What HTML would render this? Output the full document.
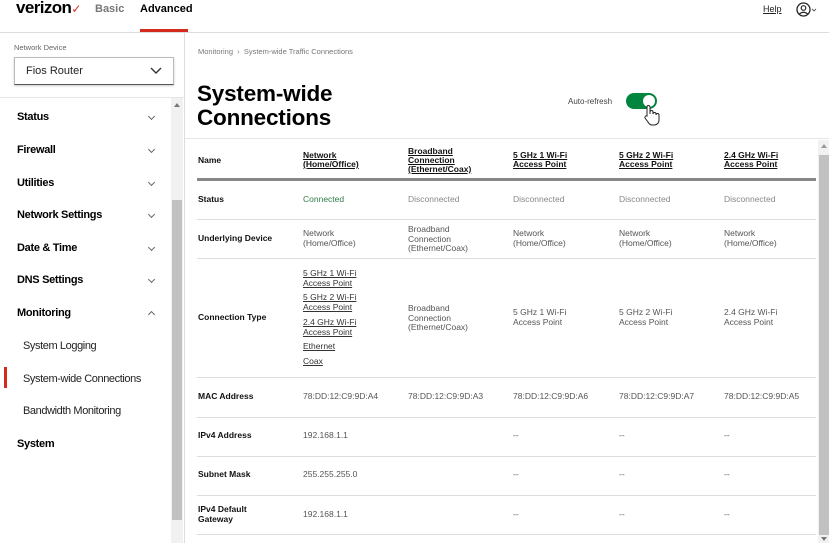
<!DOCTYPE html>
<html><head><meta charset="utf-8"><style>
*{margin:0;padding:0;box-sizing:border-box}
body{width:829px;height:543px;overflow:hidden;background:#fff;font-family:"Liberation Sans",Arial,sans-serif;color:#000;position:relative}
.a{position:absolute;white-space:nowrap}
.nav{font-size:11px;font-weight:bold;letter-spacing:-0.3px}
.chev{position:absolute;left:149px;width:5px;height:5px;border-right:1px solid #666;border-bottom:1px solid #666;transform:rotate(45deg)}
.sub{font-size:11px;color:#222;letter-spacing:-0.4px}
.t{font-size:8.5px;color:#555;line-height:9.5px}
.lb{font-size:8.5px;font-weight:bold;color:#111;line-height:9.5px}
.h{font-size:8.5px;font-weight:bold;color:#111;text-decoration:underline;line-height:9px}
.u{text-decoration:underline;color:#333}
.hr{position:absolute;left:197px;width:619px;height:1px;background:#ddd}
</style></head><body>
<div class="a" style="left:16px;top:-2px;font-size:17px;font-weight:bold;letter-spacing:-0.6px">verizon<span style="color:#d52b1e;font-size:12px;font-weight:normal">✓</span></div>
<div class="a" style="left:95px;top:3px;font-size:11px;font-weight:bold;color:#777">Basic</div>
<div class="a" style="left:140px;top:3px;font-size:11px;font-weight:bold">Advanced</div>
<div class="a" style="left:140px;top:29px;width:48px;height:3px;background:#d52b1e"></div>
<div class="a" style="left:763px;top:4px;font-size:9px;text-decoration:underline;color:#222">Help</div>
<svg class="a" style="left:796px;top:2px" width="26" height="16"><circle cx="7.5" cy="7.5" r="6.5" fill="none" stroke="#222" stroke-width="1.3"/><circle cx="7.5" cy="6" r="2.3" fill="none" stroke="#222" stroke-width="1.2"/><path d="M3.3 12 Q7.5 8.5 11.7 12" fill="none" stroke="#222" stroke-width="1.2"/><path d="M16 7l2 2 2-2" fill="none" stroke="#555" stroke-width="0.9"/></svg>
<div class="a" style="left:0;top:32px;width:829px;height:1px;background:#ddd"></div>
<div class="a" style="left:184px;top:33px;width:1px;height:510px;background:#ddd"></div>
<div class="a" style="left:14px;top:43px;font-size:7.5px;color:#666">Network Device</div>
<div class="a" style="left:14px;top:57px;width:160px;height:28px;border:1px solid #bbb;border-bottom:1.5px solid #555;box-shadow:0 1px 2px #ccc"></div>
<div class="a" style="left:26px;top:65px;font-size:11px;color:#222">Fios Router</div>
<svg class="a" style="left:150px;top:67px" width="12" height="8"><path d="M1 1l5 5 5-5" fill="none" stroke="#333" stroke-width="1.4"/></svg>
<div class="a" style="left:0;top:97px;width:184px;height:1px;background:#e5e5e5"></div>
<div class="a" style="left:171px;top:98px;width:12px;height:445px;background:#f1f1f1"></div>
<div class="a" style="left:172px;top:200px;width:10px;height:320px;background:#c1c1c1"></div>
<div class="a" style="left:174px;top:103px;width:0;height:0;border-left:3px solid transparent;border-right:3px solid transparent;border-bottom:4px solid #777"></div>
<div class="a nav" style="left:17px;top:111px">Status</div><div class="chev" style="top:114px"></div>
<div class="a nav" style="left:17px;top:144px">Firewall</div><div class="chev" style="top:147px"></div>
<div class="a nav" style="left:17px;top:177px">Utilities</div><div class="chev" style="top:180px"></div>
<div class="a nav" style="left:17px;top:209px">Network Settings</div><div class="chev" style="top:212px"></div>
<div class="a nav" style="left:17px;top:242px">Date &amp; Time</div><div class="chev" style="top:245px"></div>
<div class="a nav" style="left:17px;top:274px">DNS Settings</div><div class="chev" style="top:277px"></div>
<div class="a nav" style="left:17px;top:307px">Monitoring</div><div class="chev" style="top:312px;transform:rotate(225deg)"></div>
<div class="a sub" style="left:23px;top:340px">System Logging</div>
<div class="a" style="left:4px;top:367px;width:3px;height:21px;background:#d52b1e"></div>
<div class="a sub" style="left:23px;top:373px">System-wide Connections</div>
<div class="a sub" style="left:23px;top:405px">Bandwidth Monitoring</div>
<div class="a nav" style="left:17px;top:438px">System</div>
<div class="a" style="left:198px;top:47px;font-size:7.5px;color:#777">Monitoring &nbsp;›&nbsp; System-wide Traffic Connections</div>
<div class="a" style="left:197px;top:82px;font-size:22.5px;font-weight:bold;line-height:24px;letter-spacing:-0.2px">System-wide<br>Connections</div>
<div class="a" style="left:568px;top:97px;font-size:8px;color:#444">Auto-refresh</div>
<div class="a" style="left:626px;top:93px;width:31px;height:16px;border-radius:8px;background:#00853e"></div>
<div class="a" style="left:643px;top:95px;width:12px;height:12px;border-radius:6px;background:#fff"></div>
<svg class="a" style="left:643px;top:104px" width="18" height="24"><path d="M4 12V3a1.5 1.5 0 0 1 3 0v7l0-2a1.5 1.5 0 0 1 3 0v2a1.5 1.5 0 0 1 3 0v1a1.5 1.5 0 0 1 3 0v5c0 3-2 5-5 5H9c-2 0-3-1-4-3L2 14a1.5 1.5 0 0 1 2-2z" fill="#fff" stroke="#222" stroke-width="1"/></svg>
<div class="a" style="left:185px;top:138px;width:644px;height:1px;background:#e5e5e5"></div>
<div class="a" style="left:818px;top:140px;width:11px;height:403px;background:#f1f1f1"></div>
<div class="a" style="left:819px;top:155px;width:10px;height:380px;background:#c1c1c1"></div>
<div class="a" style="left:821px;top:144px;border-left:3px solid transparent;border-right:3px solid transparent;border-bottom:4px solid #999"></div>
<div class="a" style="left:821px;top:537px;border-left:3px solid transparent;border-right:3px solid transparent;border-top:4px solid #777"></div>
<div class="a lb" style="left:198px;top:156px">Name</div>
<div class="a h" style="left:303px;top:151px">Network<br>(Home/Office)</div>
<div class="a h" style="left:408px;top:147px">Broadband<br>Connection<br>(Ethernet/Coax)</div>
<div class="a h" style="left:513px;top:151px">5 GHz 1 Wi-Fi<br>Access Point</div>
<div class="a h" style="left:619px;top:151px">5 GHz 2 Wi-Fi<br>Access Point</div>
<div class="a h" style="left:724px;top:151px">2.4 GHz Wi-Fi<br>Access Point</div>
<div class="a" style="left:197px;top:178px;width:619px;height:3px;background:#888"></div>
<div class="a lb" style="left:198px;top:195px">Status</div>
<div class="a t" style="left:303px;top:195px;color:#2f7d4a">Connected</div>
<div class="a t" style="left:408px;top:195px;color:#888">Disconnected</div>
<div class="a t" style="left:513px;top:195px;color:#888">Disconnected</div>
<div class="a t" style="left:619px;top:195px;color:#888">Disconnected</div>
<div class="a t" style="left:724px;top:195px;color:#888">Disconnected</div>
<div class="hr" style="top:219px"></div>
<div class="a lb" style="left:198px;top:234px">Underlying Device</div>
<div class="a t" style="left:303px;top:229px">Network<br>(Home/Office)</div>
<div class="a t" style="left:408px;top:225px">Broadband<br>Connection<br>(Ethernet/Coax)</div>
<div class="a t" style="left:513px;top:229px">Network<br>(Home/Office)</div>
<div class="a t" style="left:619px;top:229px">Network<br>(Home/Office)</div>
<div class="a t" style="left:724px;top:229px">Network<br>(Home/Office)</div>
<div class="hr" style="top:258px"></div>
<div class="a lb" style="left:198px;top:313px">Connection Type</div>
<div class="a t" style="left:303px;top:269px"><span class="u">5 GHz 1 Wi-Fi</span><br><span class="u">Access Point</span></div>
<div class="a t" style="left:303px;top:293px"><span class="u">5 GHz 2 Wi-Fi</span><br><span class="u">Access Point</span></div>
<div class="a t" style="left:303px;top:318px"><span class="u">2.4 GHz Wi-Fi</span><br><span class="u">Access Point</span></div>
<div class="a t" style="left:303px;top:342px"><span class="u">Ethernet</span></div>
<div class="a t" style="left:303px;top:357px"><span class="u">Coax</span></div>
<div class="a t" style="left:408px;top:304px">Broadband<br>Connection<br>(Ethernet/Coax)</div>
<div class="a t" style="left:513px;top:308px">5 GHz 1 Wi-Fi<br>Access Point</div>
<div class="a t" style="left:619px;top:308px">5 GHz 2 Wi-Fi<br>Access Point</div>
<div class="a t" style="left:724px;top:308px">2.4 GHz Wi-Fi<br>Access Point</div>
<div class="hr" style="top:377px"></div>
<div class="a lb" style="left:198px;top:392px">MAC Address</div>
<div class="a t" style="left:303px;top:392px">78:DD:12:C9:9D:A4</div>
<div class="a t" style="left:408px;top:392px">78:DD:12:C9:9D:A3</div>
<div class="a t" style="left:513px;top:392px">78:DD:12:C9:9D:A6</div>
<div class="a t" style="left:619px;top:392px">78:DD:12:C9:9D:A7</div>
<div class="a t" style="left:724px;top:392px">78:DD:12:C9:9D:A5</div>
<div class="hr" style="top:417px"></div>
<div class="a lb" style="left:198px;top:431px">IPv4 Address</div>
<div class="a t" style="left:303px;top:431px">192.168.1.1</div>
<div class="a t" style="left:513px;top:431px">--</div><div class="a t" style="left:619px;top:431px">--</div><div class="a t" style="left:724px;top:431px">--</div>
<div class="hr" style="top:456px"></div>
<div class="a lb" style="left:198px;top:470px">Subnet Mask</div>
<div class="a t" style="left:303px;top:470px">255.255.255.0</div>
<div class="a t" style="left:513px;top:470px">--</div><div class="a t" style="left:619px;top:470px">--</div><div class="a t" style="left:724px;top:470px">--</div>
<div class="hr" style="top:495px"></div>
<div class="a lb" style="left:198px;top:505px">IPv4 Default<br>Gateway</div>
<div class="a t" style="left:303px;top:510px">192.168.1.1</div>
<div class="a t" style="left:513px;top:510px">--</div><div class="a t" style="left:619px;top:510px">--</div><div class="a t" style="left:724px;top:510px">--</div>
<div class="hr" style="top:534px"></div>
</body></html>
